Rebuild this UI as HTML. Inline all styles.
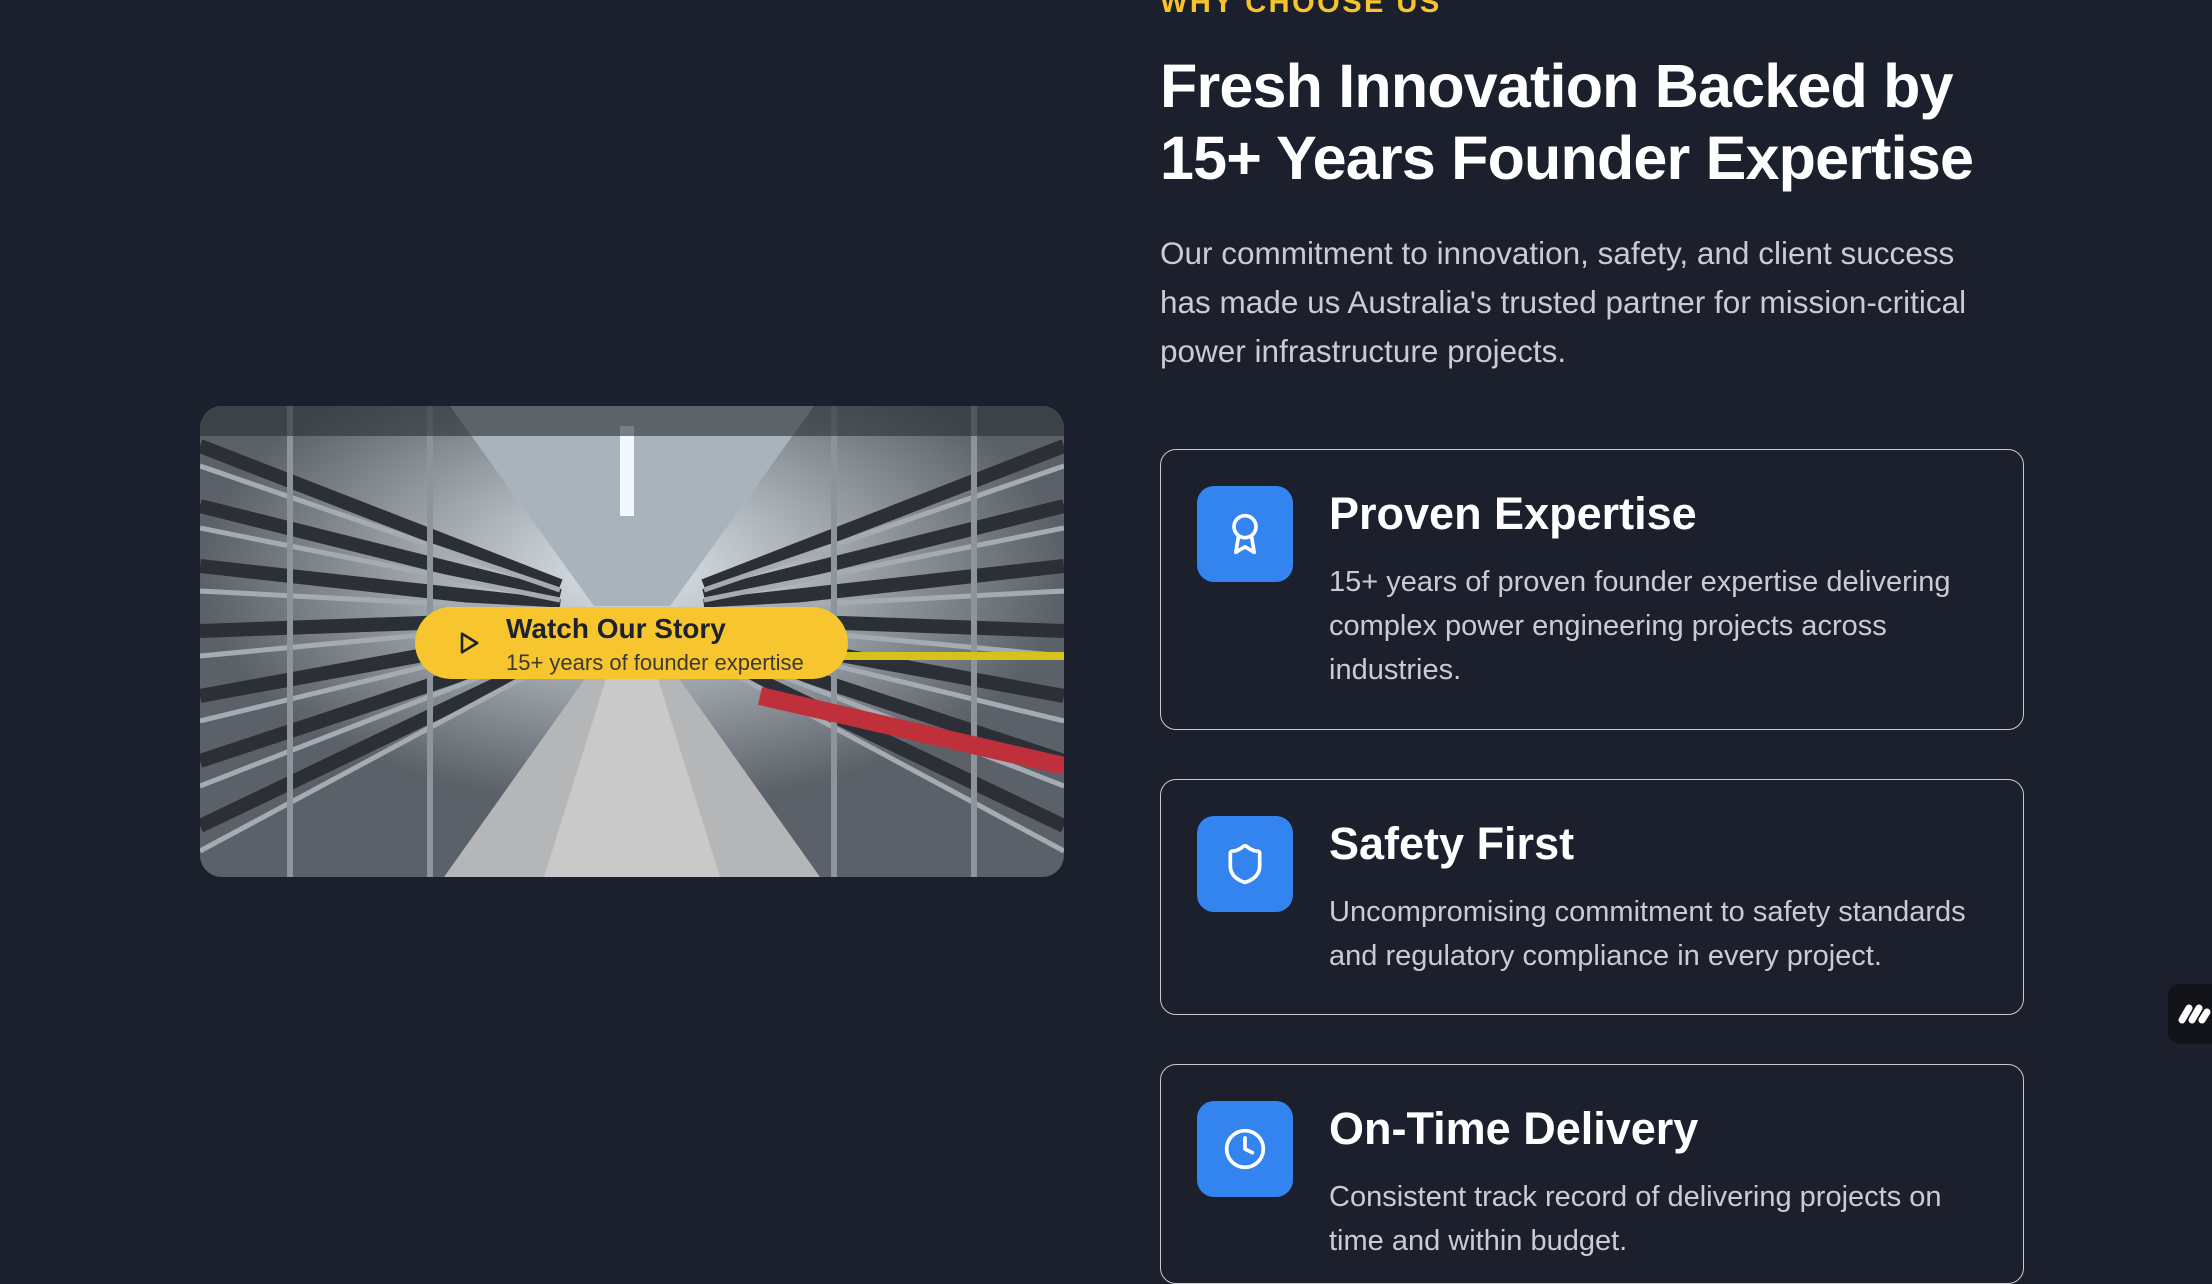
<!DOCTYPE html>
<html><head><meta charset="utf-8"><style>
*{margin:0;padding:0;box-sizing:border-box}
body{width:2212px;height:1228px;overflow:hidden;background:#1b202c;font-family:"Liberation Sans",sans-serif;position:relative;color:#fff}
.eyebrow{position:absolute;left:1160px;top:-13px;font-size:29px;font-weight:700;letter-spacing:2.5px;color:#f7c52b}
h1{position:absolute;left:1160px;top:50px;font-size:61px;line-height:72px;font-weight:700;letter-spacing:-0.8px}
.lead{position:absolute;left:1160px;top:229px;width:836px;font-size:31.5px;line-height:49px;color:#c9ccd3}
.img{position:absolute;left:200px;top:406px;width:864px;height:471px;border-radius:22px;overflow:hidden;background:#50565e}
.btn{position:absolute;left:415px;top:607px;width:433px;height:72px;border-radius:36px;background:#f7c52e;color:#1d2230}
.btn svg{position:absolute;left:40px;top:22px}
.btn .t{position:absolute;left:91px;top:6px;font-size:28px;font-weight:700}
.btn .s{position:absolute;left:91px;top:43px;font-size:22px;color:#3a3a36}
.card{position:absolute;left:1160px;width:864px;border:1.5px solid #c8cbd2;border-radius:16px}
.ic{position:absolute;left:36px;top:36px;width:96px;height:96px;border-radius:17px;background:#3384ee;display:flex;align-items:center;justify-content:center}
.card h3{position:absolute;left:168px;top:36px;font-size:45px;font-weight:700;line-height:56px}
.card p{position:absolute;left:168px;top:110px;width:680px;font-size:29px;line-height:44px;color:#c9ccd3}
.tab{position:absolute;left:2168px;top:984px;width:60px;height:60px;border-radius:12px;background:#121419}
</style></head><body>
<div class="eyebrow">WHY CHOOSE US</div>
<h1>Fresh Innovation Backed by<br>15+ Years Founder Expertise</h1>
<div class="lead">Our commitment to innovation, safety, and client success<br>has made us Australia's trusted partner for mission-critical<br>power infrastructure projects.</div>

<div class="img"><svg width="864" height="471" viewBox="0 0 864 471">
<defs><radialGradient id="g" cx="0.5" cy="0.35" r="0.5"><stop offset="0" stop-color="#dfe6ec"/><stop offset="1" stop-color="#5b6168"/></radialGradient></defs>
<rect width="864" height="471" fill="url(#g)"/>
<polygon points="250,0 614,0 470,200 394,200" fill="#a9b3bb"/>
<rect x="420" y="20" width="14" height="90" fill="#f2f8ff"/>
<polygon points="394,260 470,260 620,471 244,471" fill="#b4b6b8"/>
<polygon points="410,260 454,260 520,471 344,471" fill="#c9c9c9"/>
<g stroke="#2c3036" stroke-width="14">
<path d="M0 40 L360 180"/><path d="M0 100 L360 190"/><path d="M0 160 L360 200"/><path d="M0 225 L360 212"/><path d="M0 290 L360 224"/><path d="M0 355 L360 236"/><path d="M0 420 L360 248"/>
<path d="M864 40 L504 180"/><path d="M864 100 L504 190"/><path d="M864 160 L504 200"/><path d="M864 225 L504 212"/><path d="M864 290 L504 224"/><path d="M864 355 L504 236"/><path d="M864 420 L504 248"/>
</g>
<g stroke="#a4abb2" stroke-width="5">
<path d="M0 60 L360 184"/><path d="M0 122 L360 194"/><path d="M0 185 L360 204"/><path d="M0 250 L360 216"/><path d="M0 315 L360 228"/><path d="M0 380 L360 240"/><path d="M0 445 L360 252"/>
<path d="M864 60 L504 184"/><path d="M864 122 L504 194"/><path d="M864 185 L504 204"/><path d="M864 250 L504 216"/><path d="M864 315 L504 228"/><path d="M864 380 L504 240"/><path d="M864 445 L504 252"/>
</g>
<g stroke="#8d949b" stroke-width="6"><path d="M90 0V471"/><path d="M230 0V471"/><path d="M634 0V471"/><path d="M774 0V471"/></g>
<path d="M864 360 L560 290" stroke="#c0303a" stroke-width="18"/>
<path d="M864 250 L600 250" stroke="#d6c21c" stroke-width="8"/>
<path d="M864 0 L0 0 L0 30 L864 30Z" fill="#2a2e34" opacity=".6"/>
</svg></div>
<div class="btn">
<svg width="28" height="28" viewBox="0 0 24 24" fill="none" stroke="#1d2230" stroke-width="2.2" stroke-linejoin="round"><path d="M6 4l13 8-13 8z"/></svg>
<div class="t">Watch Our Story</div><div class="s">15+ years of founder expertise</div></div>

<div class="card" style="top:449px;height:281px">
<div class="ic"><svg width="44" height="44" viewBox="0 0 24 24" fill="none" stroke="#fff" stroke-width="2" stroke-linecap="round" stroke-linejoin="round"><circle cx="12" cy="8" r="6"/><path d="M15.5 12.9L17 22l-5-3-5 3 1.5-9.1"/></svg></div>
<h3>Proven Expertise</h3>
<p>15+ years of proven founder expertise delivering<br>complex power engineering projects across<br>industries.</p></div>

<div class="card" style="top:779px;height:236px">
<div class="ic"><svg width="44" height="44" viewBox="0 0 24 24" fill="none" stroke="#fff" stroke-width="2" stroke-linecap="round" stroke-linejoin="round"><path d="M20 13c0 5-3.5 7.5-7.66 8.95a1 1 0 0 1-.67-.01C7.5 20.5 4 18 4 13V6a1 1 0 0 1 1-1c2 0 4.5-1.2 6.24-2.72a1.17 1.17 0 0 1 1.52 0C14.51 3.81 17 5 19 5a1 1 0 0 1 1 1z"/></svg></div>
<h3>Safety First</h3>
<p>Uncompromising commitment to safety standards<br>and regulatory compliance in every project.</p></div>

<div class="card" style="top:1064px;height:220px">
<div class="ic"><svg width="44" height="44" viewBox="0 0 24 24" fill="none" stroke="#fff" stroke-width="2" stroke-linecap="round" stroke-linejoin="round"><circle cx="12" cy="12" r="10"/><path d="M12 6v6l4 2"/></svg></div>
<h3>On-Time Delivery</h3>
<p>Consistent track record of delivering projects on<br>time and within budget.</p></div>

<div class="tab"><svg width="60" height="60" viewBox="0 0 60 60"><g stroke="#fff" stroke-width="7" stroke-linecap="round"><path d="M14 36l7-12"/><path d="M24 36l7-12"/><path d="M34 36l5-8"/></g></svg></div>
</body></html>
